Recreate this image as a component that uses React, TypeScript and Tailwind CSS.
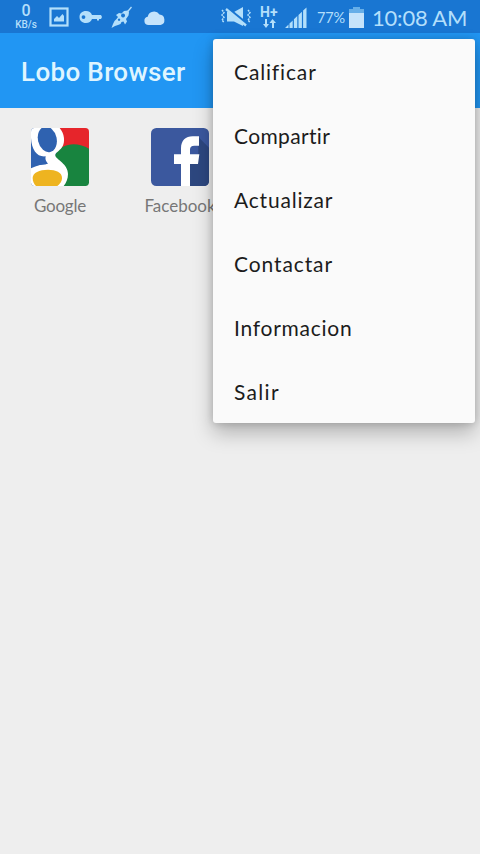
const menuItems = [
  { label: "Calificar", className: "tracking-[0.85px]" },
  { label: "Compartir", className: "tracking-[0.35px]" },
  { label: "Actualizar", className: "tracking-[0.8px]" },
  { label: "Contactar", className: "tracking-[0.9px]" },
  { label: "Informacion", className: "tracking-[0.75px]" },
  { label: "Salir", className: "tracking-[1.3px]" },
]

function StatusBar() {
  return (
    <div className="flex h-[33px] items-center bg-[#1976d2] text-[#b3dffb]">
      <div className="ml-[13px] w-[26px] text-center font-['Roboto',sans-serif] font-medium">
        <div className="text-[16px] leading-[16px]">0</div>
        <div className="text-[10px] leading-[12px]">KB/s</div>
      </div>

      <svg className="mt-px ml-[10px] shrink-0" width="20" height="20" viewBox="0 0 20 20">
        <rect x="1.5" y="1.5" width="17" height="17" fill="none" stroke="currentColor" strokeWidth="2.2" />
        <path d="M5 14.5V12l3-3 2 2 3.5-4L15 9v5.5z" fill="currentColor" />
      </svg>
      <svg className="mt-px ml-[10px] shrink-0" width="23" height="14" viewBox="0 0 23 14">
        <path
          fill="currentColor"
          fillRule="evenodd"
          d="M7 1c3 0 5 1.500 6 4h9l1 2-1 2h-2v1.500h-2V9h-5c-1 2.500-3 4-6 4-4 0-6.500-2.500-6.500-6S3 1 7 1zM4.500 5.200a1.900 1.900 0 1 0 0 3.800 1.900 1.900 0 0 0 0-3.800z"
        />
      </svg>
      <svg className="mt-px ml-[9px] shrink-0" width="22" height="23" viewBox="0 0 22 23">
        <path d="M20.500 1l-5 6" stroke="currentColor" strokeWidth="1.300" />
        <path
          fill="currentColor"
          fillRule="evenodd"
          d="M17 4.500l1 2-.5 3-2.500 3.500 1 2.500-2 3-1.500-3-2 .500-1 2-2.500 1L4 20l-3.500 2L2 18l1.500-3 2-2L7 11l-2-2 3-2 2.500.500L13 5zM12 7.500a2 2 0 1 0 .1 0zM8 12.500a1.200 1.200 0 1 0 .1 0z"
        />
      </svg>
      <svg className="mt-px ml-[11px] shrink-0 text-[#c5e3fb]" width="21" height="15" viewBox="0 0 21 15">
        <path fill="currentColor" d="M4.500 15A4.200 4.200 0 0 1 3.700 6.700a6.500 6.500 0 0 1 11.800-2.100 5.300 5.300 0 0 1 1 10.400z" />
      </svg>

      <svg className="mt-px ml-[55px] shrink-0" width="32" height="20" viewBox="0 0 32 20">
        <path
          fill="none"
          stroke="currentColor"
          strokeWidth="1.500"
          strokeDasharray="2 .7"
          d="M2 3l2 2.500L2 8l2 2.500L2 13l2 2.500M28 3l2 2.500L28 8l2 2.500L28 13l2 2.500"
        />
        <path fill="currentColor" d="M7 5h7l9-5v19l-9-4.500H7z" />
        <path d="M7 1.300l19 15.500" stroke="#1976d2" strokeWidth="3.800" />
        <path d="M6 2l20 16.500" stroke="currentColor" strokeWidth="2.300" />
      </svg>
      <div className="ml-[8px] w-[18px] shrink-0">
        <div className="font-['Roboto',sans-serif] text-[14px] leading-[12px] font-bold whitespace-nowrap">H+</div>
        <svg className="mt-px ml-[3px]" width="13" height="9" viewBox="0 0 13 9">
          <path fill="currentColor" d="M2 0h2v5h2L3 9 0 5h2zM9.500 0L13 4h-2v5H9V4H6.500z" />
        </svg>
      </div>
      <svg className="mt-px ml-[7px] shrink-0" width="22" height="21" viewBox="0 0 22 21">
        <path
          fill="currentColor"
          d="M0 21l3.500-3.500V21zM4.500 16.500l3.200-3V21H4.500zM8.900 12.300l3.400-3.200V21H8.900zM13.500 8l3.400-3.200V21h-3.400zM18.100 3.500L21.500.500V21h-3.400z"
        />
      </svg>

      <span className="mt-[3px] ml-[10px] w-[28px] font-['Lato',sans-serif] text-[14.5px] tracking-[-0.2px] whitespace-nowrap">
        77%
      </span>
      <svg className="mt-px ml-[4px] shrink-0" width="15" height="21" viewBox="0 0 15 21">
        <path fill="#66aee8" d="M4 0h7v2h4v4H0V2h4z" />
        <path fill="#c5e3fb" d="M0 6h15v15H0z" />
      </svg>
      <span className="mt-[3px] ml-[8px] font-['Lato',sans-serif] text-[22px] leading-none tracking-[-0.2px] whitespace-nowrap">
        10:08 AM
      </span>
    </div>
  )
}

function GoogleIcon() {
  return (
    <svg width="58" height="58" viewBox="0 0 174 174">
      <defs>
        <clipPath id="tile">
          <rect width="174" height="174" rx="11" />
        </clipPath>
      </defs>
      <g clipPath="url(#tile)">
        <path fill="#2f62b0" d="M0 0h110v174H0z" />
        <path fill="#e6252b" d="M70 0h104v70H70z" />
        <path fill="#18843f" d="M72 82C92 42 140 42 174 62v112H72z" />
        <path
          fill="#fff"
          d="M0 0h86c14 16 18 42 7 58-8 12-22 17-20 25 3 12 38 24 38 55 0 15-5 26-13 36H0v-53c14-8 32-12 51-14-7-7-9-14-7-22C18 88 2 66 0 30z"
        />
        <path fill="#2f62b0" d="M0 76c11 12 25 16 42 17-3 7-1 11 4 16-17 1-34 4-46 9z" />
        <ellipse cx="49" cy="34" rx="28" ry="39" transform="rotate(-13 49 34)" fill="#2f62b0" />
        <path fill="#eeb420" d="M5 150c0-16 20-25 46-25 24 0 42 8 42 24 0 12-7 19-14 25H15c-6-6-10-13-10-24z" />
      </g>
    </svg>
  )
}

function FacebookIcon() {
  return (
    <svg width="58" height="58" viewBox="0 0 174 174">
      <rect width="174" height="174" rx="16" fill="#3b589e" />
      <path fill="#2d477f" d="M142 27l32 32v99c0 10-6 16-16 16h-41V103l25-24z" />
      <path
        fill="#fff"
        d="M90 174v-66H69V79h21V61c0-23 14-36 35-36h19v28h-14c-9 0-13 4-13 12v14h28l-4 29h-24v66z"
      />
    </svg>
  )
}

export default function App() {
  return (
    <div className="relative h-[854px] w-[480px] overflow-hidden bg-[#eeeeee]">
      <StatusBar />
      <header className="flex h-[75px] items-center bg-[#2196f3] pl-[21px]">
        <h1 className="mt-[4px] font-['Roboto',sans-serif] text-[26px] font-medium tracking-[0.35px] whitespace-nowrap text-[#dff5ff]">
          Lobo Browser
        </h1>
      </header>

      <main className="flex pt-[20px] font-['Lato',sans-serif] text-[17px] text-[#777777]">
        <div className="flex w-[120px] flex-col items-center">
          <GoogleIcon />
          <span className="mt-[8px] leading-[24px] tracking-[-0.2px]">Google</span>
        </div>
        <div className="flex w-[120px] flex-col items-center">
          <FacebookIcon />
          <span className="mt-[8px] leading-[24px]">Facebook</span>
        </div>
      </main>

      <ul className="absolute top-[39px] left-[213px] w-[262px] rounded-[3px] bg-[#fafafa] font-['Lato',sans-serif] text-[21px] text-[#1c1c1c] shadow-[0_10px_20px_rgba(0,0,0,0.25),0_0_8px_rgba(0,0,0,0.18)]">
        {menuItems.map((item) => (
          <li key={item.label} className="flex h-[64px] items-center pt-px pl-[21px]">
            <span className={item.className}>{item.label}</span>
          </li>
        ))}
      </ul>
    </div>
  )
}
